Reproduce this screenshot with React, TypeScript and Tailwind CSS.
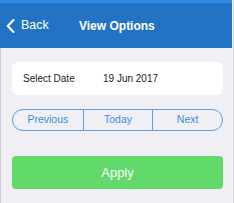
import React from "react";

export default function App() {
  return (
    <div
      className="w-[234px] h-[203px] flex bg-[#efeff4] overflow-hidden"
      style={{ fontFamily: '"Liberation Sans", Arial, sans-serif' }}
    >
      <div className="w-[232px] flex flex-col">
        <div className="h-[3px] bg-[#2e8be6]" />
        <div className="h-[45px] bg-[#2273c3] flex items-center text-white">
          <div className="flex items-center pl-[6px] w-[79px]">
            <svg width="9" height="14" viewBox="0 0 9 14" className="mr-[6px]">
              <path d="M7.5 1 L1.8 7 L7.5 13" fill="none" stroke="white" strokeWidth="2" strokeLinecap="round" strokeLinejoin="round" />
            </svg>
            <span className="text-[12.5px] leading-none">Back</span>
          </div>
          <span className="text-[12px] font-bold leading-none">View Options</span>
        </div>
        <div className="flex-1 flex flex-col pl-[11px] pr-[9px] border-l border-[#c9c9ce]">
          <div className="mt-[14px] h-[33px] bg-white rounded-[6px] flex items-center text-[10px] text-[#222]">
            <span className="pl-[11px] w-[91px]">Select Date</span>
            <span>19 Jun 2017</span>
          </div>
          <div className="mt-[14px] h-[22px] grid grid-cols-3 border border-[#5a9fe9] rounded-full text-[10.5px] text-[#3d8de0]">
            <div className="flex items-center justify-center">Previous</div>
            <div className="flex items-center justify-center border-l border-[#5a9fe9]">Today</div>
            <div className="flex items-center justify-center border-l border-[#5a9fe9]">Next</div>
          </div>
          <div className="mt-[25px] h-[33px] bg-[#62d96b] rounded-[4px] flex items-center justify-center text-white text-[13px]">
            Apply
          </div>
        </div>
      </div>
      <div className="w-[2px] flex">
        <div className="w-px bg-[#f7f7fa]" />
        <div className="w-px bg-[#d4d4d8]" />
      </div>
    </div>
  );
}
